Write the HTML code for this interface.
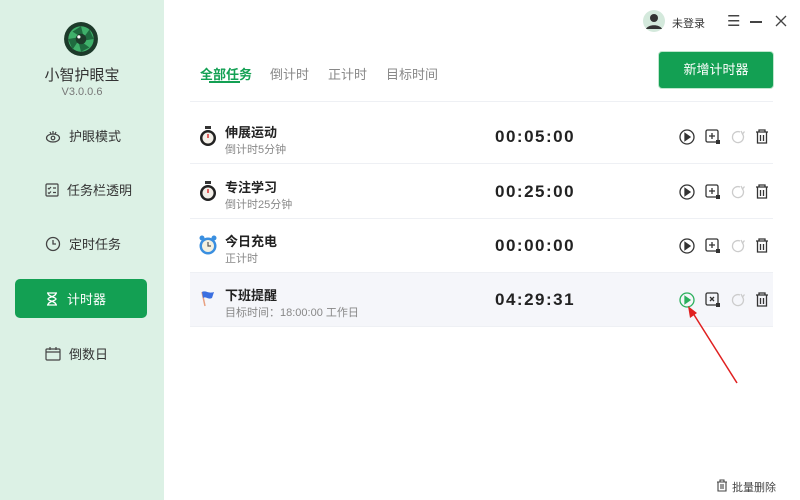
<!DOCTYPE html>
<html><head><meta charset="utf-8"><style>
*{margin:0;padding:0;box-sizing:border-box}
body{width:800px;height:500px;overflow:hidden;background:#fff;font-family:"Liberation Sans","Noto Sans CJK SC",sans-serif;position:relative;color:#333}
.side{position:absolute;left:0;top:0;width:164px;height:500px;background:#dcf1e5}
.abs{position:absolute}
.nav{position:absolute;left:15px;width:132px;height:39px;display:flex;align-items:center;padding-left:30px;font-size:13px;color:#333}
.nav svg{margin-right:8px}
.nav.act{background:#13a053;color:#fff;border-radius:5px}
.tab{position:absolute;top:64px;font-size:13px;color:#888}
.row{position:absolute;left:190px;width:583px;height:54px;border-bottom:1px solid #eef0f4}
.row .t{position:absolute;left:35px;top:12px;font-size:13px;font-weight:bold;color:#222}
.row .s{position:absolute;left:35px;top:31px;font-size:11px;color:#888}
.row .tm{position:absolute;left:305px;top:17px;font-size:17px;font-weight:bold;letter-spacing:1.5px;color:#222}
.row .ic{position:absolute;left:8px;top:15px}
.ops{position:absolute;left:488px;top:18px}
</style></head><body>
<div class="side">
<svg class="abs" style="left:63px;top:21px" width="36" height="36" viewBox="0 0 34 34"><circle cx="17" cy="17" r="16" fill="#1d3a2a"/><circle cx="17" cy="17" r="12" fill="#3fb06a"/><path d="M17 5 L20 17 L9 10Z M29 17 L17 19 L25 8Z M17 29 L14 17 L25 25Z M5 17 L17 15 L9 27Z" fill="#1f6b3f"/><circle cx="17" cy="17" r="5" fill="#1d3a2a"/><circle cx="15" cy="15" r="1.5" fill="#fff"/></svg>
<div class="abs" style="left:0;width:164px;top:64px;text-align:center;font-size:15px;color:#333">小智护眼宝</div>
<div class="abs" style="left:0;width:164px;top:86px;text-align:center;font-size:11px;color:#777">V3.0.0.6</div>
<div class="nav" style="top:116px"><svg width="16" height="14" viewBox="0 0 16 14" fill="none" stroke="#444" stroke-width="1.2"><ellipse cx="8" cy="9" rx="6.5" ry="4"/><circle cx="8" cy="9" r="1.8"/><path d="M5 3l1 2M8 2v2.5M11 3l-1 2"/></svg>护眼模式</div>
<div class="nav" style="top:170px"><svg width="14" height="14" viewBox="0 0 14 14" fill="none" stroke="#444" stroke-width="1.2"><rect x="1" y="1" width="12" height="12" rx="1"/><path d="M3 5l1 1 2-2M3 9.5l1 1 2-2M8 5h3M8 9.5h3"/></svg>任务栏透明</div>
<div class="nav" style="top:224px"><svg width="16" height="16" viewBox="0 0 16 16" fill="none" stroke="#444" stroke-width="1.3"><circle cx="8" cy="8" r="6.5"/><path d="M8 4v4h3"/></svg>定时任务</div>
<div class="nav act" style="top:279px"><svg width="14" height="14" viewBox="0 0 14 14" fill="none" stroke="#fff" stroke-width="1.3"><path d="M2 1h10M2 13h10M3 1c0 4 8 4 8 6s-8 2-8 6M11 1c0 4-8 4-8 6s8 2 8 6"/></svg>计时器</div>
<div class="nav" style="top:334px"><svg width="16" height="15" viewBox="0 0 16 15" fill="none" stroke="#444" stroke-width="1.2"><rect x="1" y="3" width="14" height="11" rx="1"/><path d="M1 6h14M5 1v3M11 1v3"/></svg>倒数日</div>
</div>

<svg class="abs" style="left:643px;top:10px" width="22" height="22" viewBox="0 0 22 22"><circle cx="11" cy="11" r="11" fill="#d4e9dc"/><circle cx="11" cy="8" r="4" fill="#333"/><path d="M3 19c2-5 14-5 16 0z" fill="#333"/></svg>
<div class="abs" style="left:672px;top:15px;font-size:11px;color:#333">未登录</div>
<div class="abs" style="left:727px;top:12px;font-size:15px;color:#444">☰</div>
<div class="abs" style="left:750px;top:21px;width:12px;height:1.5px;background:#444"></div>
<svg class="abs" style="left:775px;top:15px" width="12" height="12"><path d="M1 1l10 10M11 1L1 11" stroke="#444" stroke-width="1.3"/></svg>

<div class="tab" style="left:200px;color:#13a053;font-weight:bold">全部任务</div>
<div class="abs" style="left:209px;top:81px;width:31px;height:2px;background:#13a053"></div>
<div class="tab" style="left:270px">倒计时</div>
<div class="tab" style="left:328px">正计时</div>
<div class="tab" style="left:386px">目标时间</div>
<div class="abs" style="left:658px;top:51px;width:116px;height:38px;border:1px solid #bfe6cd;background:#13a053;border-radius:4px;color:#fff;font-size:13px;text-align:center;line-height:36px">新增计时器</div>
<div class="abs" style="left:190px;top:101px;width:583px;height:1px;background:#eef0f4"></div>

<div class="row" style="top:110px"><svg class="ic" width="20" height="22" viewBox="0 0 20 22"><rect x="7" y="1" width="6" height="3" fill="#333"/><circle cx="10" cy="13" r="8" fill="#222"/><circle cx="10" cy="13" r="5.5" fill="#f3efe8"/><path d="M10 13V9" stroke="#d33" stroke-width="1.5"/></svg><div class="t">伸展运动</div><div class="s">倒计时5分钟</div><div class="tm">00:05:00</div>
<svg class="ops" width="92" height="18" viewBox="0 0 92 18" fill="none" stroke="#333" stroke-width="1.3"><circle cx="9" cy="9" r="7"/><path d="M7 5.5v7l5-3.5z" fill="#333"/><rect x="28" y="2" width="12" height="12" rx="1.5"/><path d="M34 5v6M31 8h6"/><rect x="38" y="12" width="4" height="4" fill="#333" stroke="none"/><path d="M62 4a5.5 5.5 0 1 0 2.5 2" stroke="#ccc"/><path d="M63 3l1.5 3 2-2.5" stroke="#ccc"/><path d="M78 4h12M81 4V2h6v2M79.5 4v11h9V4M82.5 7v6M85.5 7v6"/></svg></div>
<div class="row" style="top:165px"><svg class="ic" width="20" height="22" viewBox="0 0 20 22"><rect x="7" y="1" width="6" height="3" fill="#333"/><circle cx="10" cy="13" r="8" fill="#222"/><circle cx="10" cy="13" r="5.5" fill="#f3efe8"/><path d="M10 13V9" stroke="#d33" stroke-width="1.5"/></svg><div class="t">专注学习</div><div class="s">倒计时25分钟</div><div class="tm">00:25:00</div>
<svg class="ops" width="92" height="18" viewBox="0 0 92 18" fill="none" stroke="#333" stroke-width="1.3"><circle cx="9" cy="9" r="7"/><path d="M7 5.5v7l5-3.5z" fill="#333"/><rect x="28" y="2" width="12" height="12" rx="1.5"/><path d="M34 5v6M31 8h6"/><rect x="38" y="12" width="4" height="4" fill="#333" stroke="none"/><path d="M62 4a5.5 5.5 0 1 0 2.5 2" stroke="#ccc"/><path d="M63 3l1.5 3 2-2.5" stroke="#ccc"/><path d="M78 4h12M81 4V2h6v2M79.5 4v11h9V4M82.5 7v6M85.5 7v6"/></svg></div>
<div class="row" style="top:219px"><svg class="ic" width="20" height="22" viewBox="0 0 20 22"><circle cx="10" cy="12" r="8.5" fill="#3a8fe0"/><circle cx="10" cy="12" r="6" fill="#f4f0e0"/><path d="M10 8v4h3" stroke="#555" stroke-width="1.2" fill="none"/><circle cx="4" cy="4" r="2.5" fill="#3a8fe0"/><circle cx="16" cy="4" r="2.5" fill="#3a8fe0"/></svg><div class="t">今日充电</div><div class="s">正计时</div><div class="tm">00:00:00</div>
<svg class="ops" width="92" height="18" viewBox="0 0 92 18" fill="none" stroke="#333" stroke-width="1.3"><circle cx="9" cy="9" r="7"/><path d="M7 5.5v7l5-3.5z" fill="#333"/><rect x="28" y="2" width="12" height="12" rx="1.5"/><path d="M34 5v6M31 8h6"/><rect x="38" y="12" width="4" height="4" fill="#333" stroke="none"/><path d="M62 4a5.5 5.5 0 1 0 2.5 2" stroke="#ccc"/><path d="M63 3l1.5 3 2-2.5" stroke="#ccc"/><path d="M78 4h12M81 4V2h6v2M79.5 4v11h9V4M82.5 7v6M85.5 7v6"/></svg></div>
<div class="row" style="top:273px;background:#f5f6fa"><svg class="ic" width="20" height="22" viewBox="0 0 20 22"><path d="M4 4l3 14" stroke="#e8a080" stroke-width="1.5"/><path d="M4 4c4-2 6 2 12 0l-2 6c-4 2-6-2-9 0z" fill="#3b6fe0"/></svg><div class="t">下班提醒</div><div class="s">目标时间：18:00:00 工作日</div><div class="tm">04:29:31</div>
<svg class="ops" width="92" height="18" viewBox="0 0 92 18" fill="none" stroke="#333" stroke-width="1.3"><circle cx="9" cy="9" r="7" stroke="#2bb05c"/><path d="M7 5.5v7l5-3.5z" fill="#2bb05c" stroke="#2bb05c"/><rect x="28" y="2" width="12" height="12" rx="1.5"/><path d="M32 6l4 4M36 6l-4 4"/><rect x="38" y="12" width="4" height="4" fill="#333" stroke="none"/><path d="M62 4a5.5 5.5 0 1 0 2.5 2" stroke="#ccc"/><path d="M63 3l1.5 3 2-2.5" stroke="#ccc"/><path d="M78 4h12M81 4V2h6v2M79.5 4v11h9V4M82.5 7v6M85.5 7v6"/></svg></div>

<svg class="abs" style="left:685px;top:305px" width="55" height="80"><path d="M52 78L6 5" stroke="#e02020" stroke-width="1.5"/><path d="M3 1l2 12 7-5z" fill="#e02020"/></svg>
<svg class="abs" style="left:716px;top:479px" width="12" height="13" viewBox="0 0 12 13" fill="none" stroke="#444" stroke-width="1.1"><path d="M1 3h10M4 3V1h4v2M2 3v9h8V3M5 5v5M7 5v5"/></svg>
<div class="abs" style="left:732px;top:479px;font-size:11px;color:#444">批量删除</div>
</body></html>
